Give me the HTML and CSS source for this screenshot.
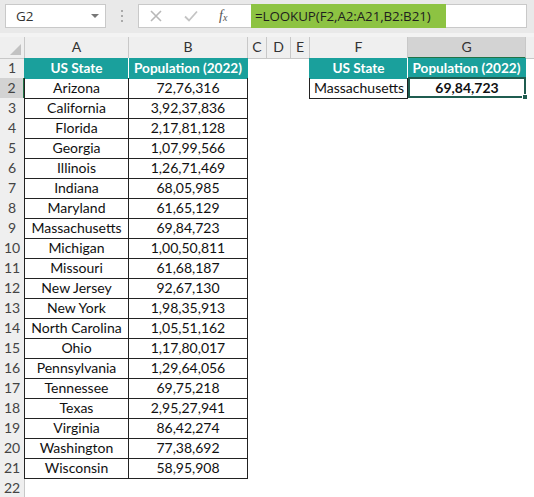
FILE: index.html
```html
<!DOCTYPE html>
<html>
<head>
<meta charset="utf-8">
<link rel="stylesheet" href="styles.css">
</head>
<body>
<div class="app">
  <div class="toolbar">
    <div class="namebox"><span class="ref">G2</span><span class="caret"></span></div>
    <div class="dots"><i></i><i></i><i></i></div>
    <div class="fbar">
      <div class="ficons">
        <svg class="ico" width="14" height="14" viewBox="0 0 14 14"><path d="M2 2 L12 12 M12 2 L2 12" stroke="#b8b8b8" stroke-width="1.6" fill="none"/></svg>
        <svg class="ico" width="16" height="14" viewBox="0 0 16 14"><path d="M2 7.5 L6 11.5 L14 2.5" stroke="#c4c4c4" stroke-width="1.8" fill="none"/></svg>
        <span class="fx">f<sub>x</sub></span>
      </div>
      <div class="formula">=LOOKUP(F2,A2:A21,B2:B21)</div>
    </div>
  </div>
  <div class="gap"></div>
  <div class="sheet">
    <div class="row hdr">
      <div class="corner"><span class="tri"></span></div>
      <div class="ch">A</div><div class="ch">B</div><div class="ch">C</div><div class="ch">D</div><div class="ch">E</div><div class="ch">F</div><div class="ch sel">G</div><div class="ch rest"></div>
    </div>
    <div class="row"><div class="rh">1</div><div class="c th ta">US State</div><div class="c th tb">Population (2022)</div><div class="c"></div><div class="c"></div><div class="c"></div><div class="c th tf">US State</div><div class="c th tg">Population (2022)</div><div class="c"></div></div>
    <div class="row"><div class="rh rsel">2</div><div class="c ta">Arizona</div><div class="c tb">72,76,316</div><div class="c"></div><div class="c"></div><div class="c"></div><div class="c tf left">Massachusetts</div><div class="c tg active">69,84,723<span class="handle"></span></div><div class="c"></div></div>
    <div class="row"><div class="rh">3</div><div class="c ta">California</div><div class="c tb">3,92,37,836</div></div>
    <div class="row"><div class="rh">4</div><div class="c ta">Florida</div><div class="c tb">2,17,81,128</div></div>
    <div class="row"><div class="rh">5</div><div class="c ta">Georgia</div><div class="c tb">1,07,99,566</div></div>
    <div class="row"><div class="rh">6</div><div class="c ta">Illinois</div><div class="c tb">1,26,71,469</div></div>
    <div class="row"><div class="rh">7</div><div class="c ta">Indiana</div><div class="c tb">68,05,985</div></div>
    <div class="row"><div class="rh">8</div><div class="c ta">Maryland</div><div class="c tb">61,65,129</div></div>
    <div class="row"><div class="rh">9</div><div class="c ta">Massachusetts</div><div class="c tb">69,84,723</div></div>
    <div class="row"><div class="rh">10</div><div class="c ta">Michigan</div><div class="c tb">1,00,50,811</div></div>
    <div class="row"><div class="rh">11</div><div class="c ta">Missouri</div><div class="c tb">61,68,187</div></div>
    <div class="row"><div class="rh">12</div><div class="c ta">New Jersey</div><div class="c tb">92,67,130</div></div>
    <div class="row"><div class="rh">13</div><div class="c ta">New York</div><div class="c tb">1,98,35,913</div></div>
    <div class="row"><div class="rh">14</div><div class="c ta">North Carolina</div><div class="c tb">1,05,51,162</div></div>
    <div class="row"><div class="rh">15</div><div class="c ta">Ohio</div><div class="c tb">1,17,80,017</div></div>
    <div class="row"><div class="rh">16</div><div class="c ta">Pennsylvania</div><div class="c tb">1,29,64,056</div></div>
    <div class="row"><div class="rh">17</div><div class="c ta">Tennessee</div><div class="c tb">69,75,218</div></div>
    <div class="row"><div class="rh">18</div><div class="c ta">Texas</div><div class="c tb">2,95,27,941</div></div>
    <div class="row"><div class="rh">19</div><div class="c ta">Virginia</div><div class="c tb">86,42,274</div></div>
    <div class="row"><div class="rh">20</div><div class="c ta">Washington</div><div class="c tb">77,38,692</div></div>
    <div class="row"><div class="rh">21</div><div class="c ta">Wisconsin</div><div class="c tb">58,95,908</div></div>
    <div class="row"><div class="rh">22</div></div>
  </div>
</div>
</body>
</html>
```
FILE: styles.css
```css
* { box-sizing: border-box; }
html, body { margin: 0; padding: 0; background: #fff; }
.app { width: 534px; height: 497px; overflow: hidden; font-family: "Lato", "Open Sans", sans-serif; }

.toolbar { height: 33px; background: #e9e9e9; display: flex; align-items: flex-start; padding: 4px 0 0 5px; }
.namebox { width: 101px; height: 24px; background: #fff; border: 1px solid #c9c9c9; display: flex; align-items: center; justify-content: space-between; padding: 0 6px 0 10px; font-family: "Open Sans", sans-serif; font-size: 13.5px; color: #333; }
.caret { width: 0; height: 0; border-left: 4px solid transparent; border-right: 4px solid transparent; border-top: 4px solid #777; }
.dots { width: 32px; height: 24px; display: flex; flex-direction: column; align-items: center; justify-content: center; gap: 3px; }
.dots i { display: block; width: 2px; height: 2px; background: #aaa; }
.fbar { width: 389px; height: 24px; background: #fff; border: 1px solid #c9c9c9; display: flex; }
.ficons { width: 112px; display: flex; align-items: center; padding-left: 10px; gap: 0; }
.ficons .ico:first-child { margin-right: 20px; }
.ficons .ico:nth-child(2) { margin-right: 20px; }
.fx { font-family: "Liberation Serif", serif; font-style: italic; font-size: 14px; color: #555; }
.fx sub { font-size: 10px; vertical-align: -1px; }
.formula { width: 195px; margin: -1px 0; height: 24px; background: #8dc342; font-family: "Open Sans", sans-serif; font-size: 13.4px; color: #1e1e1e; display: flex; align-items: center; padding-left: 4px; white-space: nowrap; letter-spacing: -0.1px; }

.gap { height: 4px; background: #f3f3f3; }

.row { display: grid; grid-template-columns: 25px 104px 119px 19px 24px 19px 98px 118px 1fr; height: 20px; }
.row.hdr { height: 21px; background: #efefef; }
.corner { position: relative; border-right: 1px solid #c8c8c8; border-bottom: 1px solid #c8c8c8; }
.tri { position: absolute; right: 3px; bottom: 3px; width: 0; height: 0; border-left: 11px solid transparent; border-bottom: 11px solid #c2c2c2; }
.ch { border-right: 1px solid #c8c8c8; border-bottom: 1px solid #c8c8c8; text-align: center; font-size: 14px; line-height: 20px; color: #333; }
.ch.sel { background: #d3d3d3; border-bottom: 2px solid #217346; }
.ch.rest { border-right: none; }

.rh { background: #efefef; border-right: 1px solid #c8c8c8; border-bottom: 1px solid #dadada; text-align: center; font-size: 14px; line-height: 20px; color: #444; }
.rh.rsel { background: #d3d3d3; border-right: 2px solid #217346; }

.c { font-size: 14px; line-height: 20px; text-align: center; color: #111; white-space: nowrap; overflow: visible; position: relative; }
.c.left { text-align: left; padding-left: 4px; }
.ta, .tb, .tf, .tg { border-right: 1px solid #222; border-bottom: 1px solid #222; }
.ta, .tf { border-left: 1px solid #222; }
.ta { margin-left: -1px; }
.tf { margin-left: -1px; }
.th { background: #1aa09c; color: #fff; font-weight: 700; font-size: 13.6px; border-color: #1aa09c #fff #1aa09c #1aa09c; }
.tb.th, .tg.th { border-right-color: #1aa09c; }
.tg.active { border: 2px solid #1f5c50; font-weight: 700; line-height: 17px; margin-top: -1px; height: 21px; }
.handle { position: absolute; right: -4px; bottom: -4px; width: 6px; height: 6px; background: #1f5c50; border: 1px solid #fff; }
```
